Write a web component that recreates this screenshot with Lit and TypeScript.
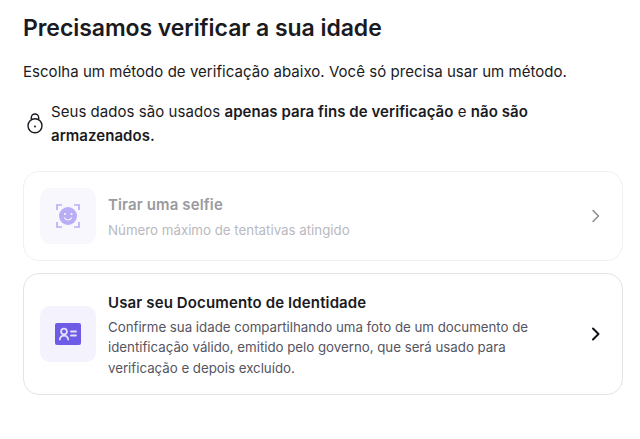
import { LitElement, html, css } from "lit";
import { customElement } from "lit/decorators.js";

const chevron = html`<svg class="chev" width="24" height="24" viewBox="0 0 24 24" fill="none" stroke="currentColor" stroke-width="2" stroke-linecap="round" stroke-linejoin="round"><path d="M9 6.500l5.500 5.500-5.500 5.500"/></svg>`;

@customElement("app-root")
export class AppRoot extends LitElement {
  static styles = css`
    :host { display: block; width: 640px; height: 439px; background: #fff; font-family: Inter, "Liberation Sans", sans-serif; color: #1a1a22; overflow: hidden; }
    .page { display: flex; flex-direction: column; padding: 13px 17px 0 23px; }
    h1 { margin: 0; font-size: 23px; line-height: 30px; font-weight: 600; letter-spacing: -0.06px; }
    .lead { margin: 17px 0 0; font-size: 15px; line-height: 24px; letter-spacing: 0.04px; }
    .note { display: flex; align-items: center; gap: 4px; margin-top: 16px; font-size: 15px; line-height: 24px; letter-spacing: 0.05px; }
    .note b { font-weight: 600; }
    .note svg { flex: none; }
    .card { display: flex; align-items: center; border: 1px solid #e4e4e7; border-radius: 16px; padding: 0 16px; }
    .card.off { margin-top: 23px; height: 88px; border-color: #f0f0f2; }
    .card.on { margin-top: 12px; height: 120px; }
    .tile { flex: none; width: 56px; height: 56px; border-radius: 10px; background: #f4f2fd; display: flex; align-items: center; justify-content: center; }
    .off .tile { background: #f8f7fe; }
    .body { flex: 1; margin-left: 12px; min-width: 0; padding-top: 3px; }
    .t { font-size: 15px; line-height: 20px; font-weight: 600; letter-spacing: 0.13px; }
    .d { font-size: 13.3px; line-height: 20.5px; color: #55555f; margin-top: 4px; letter-spacing: -0.02px; }
    .off .t { color: #9a9a9e; }
    .off .d { color: #b9b9c0; margin-top: 5px; letter-spacing: 0; }
    .chev { flex: none; margin-left: 12px; margin-right: -2px; }
    .off .chev { color: #8a8a90; stroke-width: 1.5; }
    .on .chev { color: #111118; stroke-width: 2; }
  `;

  render() {
    return html`<div class="page">
      <h1>Precisamos verificar a sua idade</h1>
      <p class="lead">Escolha um método de verificação abaixo. Você só precisa usar um método.</p>
      <div class="note">
        <svg width="24" height="24" viewBox="0 0 24 24" fill="none" stroke="#1a1a22" stroke-width="1.400"><circle cx="12" cy="13.700" r="7"/><path d="M8.300 7.500V5.700a3.700 3.700 0 0 1 7.400 0v1.800"/><circle cx="12" cy="14.500" r="1" fill="#1a1a22" stroke="none"/></svg>
        <div>Seus dados são usados <b>apenas para fins de verificação</b> e <b>não são armazenados.</b></div>
      </div>
      <div class="card off">
        <div class="tile">
          <svg width="24" height="24" viewBox="0 0 24 24" fill="none"><path d="M1 6V1h5M18 1h5v5M1 18v5h5M18 23h5v-5" stroke="#b9aef5" stroke-width="1.700"/><circle cx="12" cy="12" r="9" fill="#b9aef5"/><circle cx="9" cy="10" r="1.100" fill="#f8f7fe"/><circle cx="15.500" cy="10" r="1.100" fill="#f8f7fe"/><path d="M8.500 14c1 1.500 2.200 2 3.500 2s2.500-.5 3.500-2" stroke="#f8f7fe" stroke-width="1.200" stroke-linecap="round"/></svg>
        </div>
        <div class="body">
          <div class="t">Tirar uma selfie</div>
          <div class="d">Número máximo de tentativas atingido</div>
        </div>
        ${chevron}
      </div>
      <div class="card on">
        <div class="tile">
          <svg width="26" height="22" viewBox="0 0 26 22"><rect width="26" height="22" rx="2" fill="#6e5ce6"/><g fill="none" stroke="#e3def9" stroke-width="1.800" stroke-linecap="round"><circle cx="9" cy="8.500" r="2.900"/><path d="M4.800 16.500c.4-2.500 2-3.800 4.200-3.800s3.800 1.300 4.200 3.800"/><path d="M16 8.500h5M16 12.500h5"/></g></svg>
        </div>
        <div class="body">
          <div class="t">Usar seu Documento de Identidade</div>
          <div class="d">Confirme sua idade compartilhando uma foto de um documento de identificação válido, emitido pelo governo, que será usado para verificação e depois excluído.</div>
        </div>
        ${chevron}
      </div>
    </div>`;
  }
}
